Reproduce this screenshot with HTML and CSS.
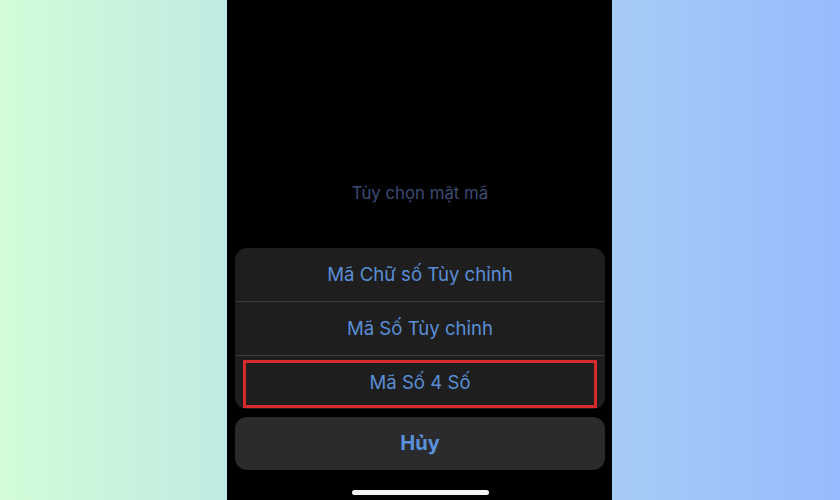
FILE: index.html
```html
<!DOCTYPE html>
<html lang="vi">
<head>
<meta charset="utf-8">
<link rel="stylesheet" href="styles.css">
</head>
<body>
<div class="page">
  <div class="side side-left"></div>
  <div class="phone">
    <div class="title">Tùy chọn mật mã</div>
    <div class="sheet">
      <div class="row">Mã Chữ số Tùy chỉnh</div>
      <div class="row">Mã Số Tùy chỉnh</div>
      <div class="row row-marked">Mã Số 4 Số<span class="mark"></span></div>
    </div>
    <div class="cancel">Hủy</div>
    <div class="home"></div>
  </div>
  <div class="side side-right"></div>
</div>
</body>
</html>
```

FILE: styles.css
```css
html, body {
  margin: 0;
  padding: 0;
}
body {
  width: 840px;
  height: 500px;
  overflow: hidden;
  font-family: Inter, "Noto Sans", sans-serif;
}
.page {
  display: flex;
  width: 840px;
  height: 500px;
}
.side {
  height: 100%;
}
.side-left {
  width: 227px;
  background: linear-gradient(to right, #d3fdd8, #c0ebe2);
}
.side-right {
  width: 228px;
  background: linear-gradient(to right, #a6ccf5, #97bbfe);
}
.phone {
  width: 385px;
  background: #000;
  box-sizing: border-box;
  padding: 183px 7px 0 8px;
  display: flex;
  flex-direction: column;
}
.title {
  height: 20px;
  line-height: 20px;
  font-size: 16.8px;
  text-align: center;
  color: #3c4c76;
  margin-bottom: 45px;
}
.sheet {
  background: #1e1e1f;
  border-radius: 12px;
  overflow: hidden;
}
.row {
  position: relative;
  height: 53px;
  line-height: 53px;
  text-align: center;
  font-size: 18.6px;
  color: #5a8ed6;
  border-top: 1px solid #3a3a3c;
}
.row:first-child {
  border-top: none;
}
.mark {
  position: absolute;
  left: 8px;
  right: 8px;
  top: 4px;
  bottom: 1px;
  border: 3px solid #d32b2b;
}
.cancel {
  margin-top: 8px;
  height: 53px;
  line-height: 53px;
  border-radius: 12px;
  background: #2b2b2d;
  text-align: center;
  font-size: 20px;
  font-weight: 700;
  color: #5a92de;
}
.home {
  align-self: center;
  margin-top: 20px;
  width: 137px;
  height: 5px;
  border-radius: 3px;
  background: #f2f2f2;
}
```
